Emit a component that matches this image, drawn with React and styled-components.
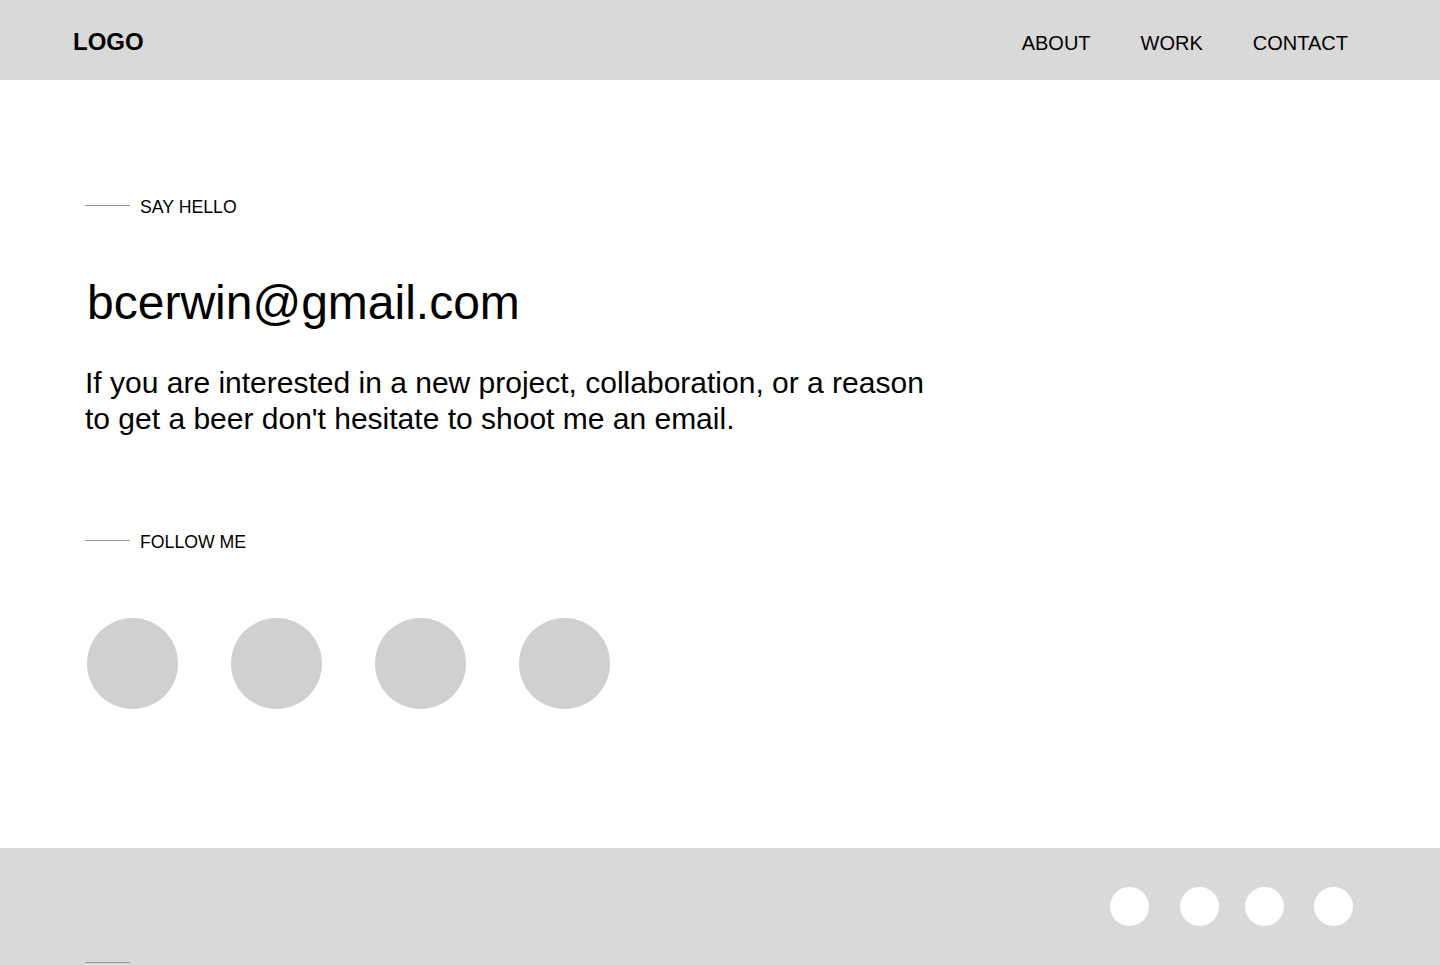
import styled, { createGlobalStyle } from "styled-components"

const GlobalStyle = createGlobalStyle`
    body {
        margin: 0;
        font-family: "Liberation Sans", Arial, sans-serif;
        color: #000;
        background: #fff;
    }
`

const Header = styled.header`
    height: 80px;
    background: #d9d9d9;
    display: flex;
    align-items: center;
    justify-content: space-between;
    padding: 0 92px 0 73px;
    .logo{
        font-size: 24px;
        font-weight: 700;
        margin-top: 3px;
    }
    nav{
        display: flex;
        gap: 50px;
        margin-top: 7px;
        a{
            font-size: 20px;
            color: #000;
            text-decoration: none;
        }
    }
`

const Main = styled.main`
    padding: 117px 85px 139px;
`

const Label = styled.div`
    display: flex;
    align-items: center;
    gap: 10px;
    font-size: 17.7px;
    line-height: 20px;
    margin-bottom: ${props => props.$after}px;
    &::before{
        content: "";
        width: 45px;
        height: 1px;
        background: #999;
        margin-top: -3px;
    }
`

const Email = styled.h1`
    margin: 0 0 38px 2px;
    font-size: 48px;
    line-height: 48px;
    font-weight: 400;
`

const Intro = styled.p`
    margin: 0 0 95px;
    font-size: 30px;
    line-height: 36px;
    max-width: 860px;
`

const Socials = styled.div`
    display: flex;
    gap: 53px;
    padding-left: 2px;
`

const Bubble = styled.a`
    width: 91px;
    height: 91px;
    border-radius: 50%;
    background: #d0d0d0;
`

const Footer = styled.footer`
    background: #d9d9d9;
    padding: 39px 87px 40px 85px;
    .icons{
        display: flex;
        justify-content: flex-end;
    }
    .rule{
        margin-top: 36px;
        width: 45px;
        height: 1px;
        background: #999;
    }
`

const Dot = styled.a`
    width: 39px;
    height: 39px;
    border-radius: 50%;
    background: #fff;
    margin-left: ${props => props.$space}px;
`

export default function App() {
    const spacing = [0, 31, 26, 30]
    return (
        <>
            <GlobalStyle />
            <Header>
                <div className="logo">LOGO</div>
                <nav>
                    <a href="#">ABOUT</a>
                    <a href="#">WORK</a>
                    <a href="#">CONTACT</a>
                </nav>
            </Header>
            <Main>
                <Label $after={62}>SAY HELLO</Label>
                <Email>bcerwin@gmail.com</Email>
                <Intro>
                    If you are interested in a new project, collaboration, or a reason to get a beer don't hesitate to shoot me an email.
                </Intro>
                <Label $after={66}>FOLLOW ME</Label>
                <Socials>
                    {[0, 1, 2, 3].map(i => (
                        <Bubble href="#" key={i} />
                    ))}
                </Socials>
            </Main>
            <Footer>
                <div className="icons">
                    {spacing.map((s, i) => (
                        <Dot href="#" key={i} $space={s} />
                    ))}
                </div>
                <div className="rule"></div>
            </Footer>
        </>
    )
}
